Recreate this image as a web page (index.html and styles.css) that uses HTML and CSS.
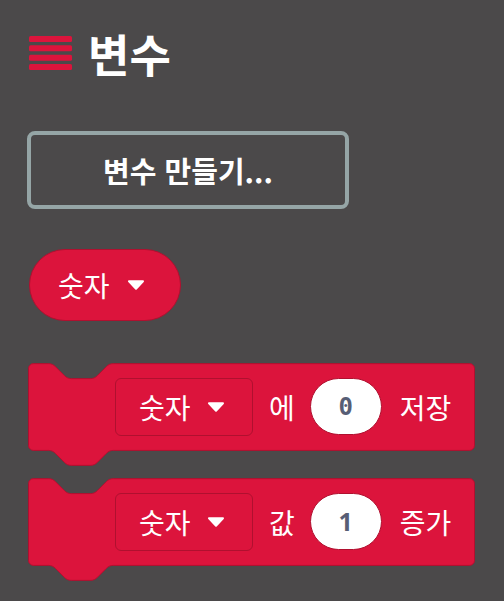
FILE: index.html
```html
<!DOCTYPE html>
<html lang="ko">
<head>
<meta charset="utf-8">
<link rel="stylesheet" href="styles.css">
</head>
<body>
<div class="panel">
  <div class="header">
    <svg class="hamburger" width="43" height="34" viewBox="0 0 43 34">
      <rect x="0" y="0" width="43" height="6" rx="1.5" fill="#dc143c"/>
      <rect x="0" y="9.33" width="43" height="6" rx="1.5" fill="#dc143c"/>
      <rect x="0" y="18.67" width="43" height="6" rx="1.5" fill="#dc143c"/>
      <rect x="0" y="28" width="43" height="6" rx="1.5" fill="#dc143c"/>
    </svg>
    <div class="title">변수</div>
  </div>

  <div class="make-btn">변수 만들기...</div>

  <div class="pill">
    <span class="var-text">숫자</span>
    <svg class="tri" width="18" height="10" viewBox="0 0 18 10"><path d="M2,1.2 L16,1.2 L9,8.8 Z" fill="#fff" stroke="#fff" stroke-width="2" stroke-linejoin="round"/></svg>
  </div>

  <div class="block">
    <svg class="block-shape" width="447" height="103" viewBox="-0.5 -0.5 448 103">
      <path d="M0,5 a5,5 0 0 1 5,-5 H20 c3,0 5,1 7,3 l9,9 c2,2 4,3 7,3 H62 c3,0 5,-1 7,-3 l9,-9 c2,-2 4,-3 7,-3 H442 a5,5 0 0 1 5,5 V82 a5,5 0 0 1 -5,5 H85 c-3,0 -5,1 -7,3 l-9,9 c-2,2 -4,3 -7,3 H43 c-3,0 -5,-1 -7,-3 l-9,-9 c-2,-2 -4,-3 -7,-3 H5 a5,5 0 0 1 -5,-5 Z" fill="#dc143c" stroke="#b0102f" stroke-width="1"/>
    </svg>
    <div class="dd">
      <span class="var-text">숫자</span>
      <svg class="tri" width="18" height="10" viewBox="0 0 18 10"><path d="M2,1.2 L16,1.2 L9,8.8 Z" fill="#fff" stroke="#fff" stroke-width="2" stroke-linejoin="round"/></svg>
    </div>
    <span class="label">에</span>
    <div class="num num-mono">0</div>
    <span class="label">저장</span>
  </div>

  <div class="block block-second">
    <svg class="block-shape" width="447" height="103" viewBox="-0.5 -0.5 448 103">
      <path d="M0,5 a5,5 0 0 1 5,-5 H20 c3,0 5,1 7,3 l9,9 c2,2 4,3 7,3 H62 c3,0 5,-1 7,-3 l9,-9 c2,-2 4,-3 7,-3 H442 a5,5 0 0 1 5,5 V82 a5,5 0 0 1 -5,5 H85 c-3,0 -5,1 -7,3 l-9,9 c-2,2 -4,3 -7,3 H43 c-3,0 -5,-1 -7,-3 l-9,-9 c-2,-2 -4,-3 -7,-3 H5 a5,5 0 0 1 -5,-5 Z" fill="#dc143c" stroke="#b0102f" stroke-width="1"/>
    </svg>
    <div class="dd">
      <span class="var-text">숫자</span>
      <svg class="tri" width="18" height="10" viewBox="0 0 18 10"><path d="M2,1.2 L16,1.2 L9,8.8 Z" fill="#fff" stroke="#fff" stroke-width="2" stroke-linejoin="round"/></svg>
    </div>
    <span class="label">값</span>
    <div class="num num-sans">1</div>
    <span class="label">증가</span>
  </div>
</div>
</body>
</html>
```

FILE: styles.css
```css
html, body {
  margin: 0;
  padding: 0;
}
body {
  background: #4b494a;
  width: 504px;
  height: 601px;
  overflow: hidden;
  font-family: "Noto Sans CJK KR", "Noto Sans", sans-serif;
  color: #fff;
}
.panel {
  display: flex;
  flex-direction: column;
  align-items: flex-start;
  padding-top: 28px;
}
.header {
  display: flex;
  align-items: center;
  height: 50px;
  margin-left: 29px;
  gap: 16px;
}
.hamburger {
  display: block;
}
.title {
  font-size: 45px;
  font-weight: 700;
  line-height: 1;
}
.make-btn {
  margin: 53px 0 0 27px;
  width: 322px;
  height: 78px;
  box-sizing: border-box;
  border: 4px solid #95a5a6;
  border-radius: 8px;
  display: flex;
  align-items: center;
  justify-content: center;
  font-size: 29px;
  font-weight: 700;
  line-height: 1;
}
.pill {
  margin: 40px 0 0 29px;
  width: 152px;
  height: 72px;
  box-sizing: border-box;
  border-radius: 36px;
  background: #dc143c;
  border: 1.5px solid #b0102f;
  display: flex;
  align-items: center;
  padding-left: 28px;
  gap: 17px;
}
.var-text {
  font-size: 28px;
  line-height: 1;
}
.tri {
  display: block;
}
.block {
  position: relative;
  margin: 42px 0 0 28px;
  width: 447px;
  height: 87px;
  box-sizing: border-box;
  padding-left: 87px;
  display: flex;
  align-items: center;
}
.block-second {
  margin-top: 28px;
}
.block-shape {
  position: absolute;
  left: -0.5px;
  top: -0.5px;
  overflow: visible;
}
.dd {
  position: relative;
  width: 138px;
  height: 58px;
  box-sizing: border-box;
  border: 1px solid #b0102f;
  border-radius: 6px;
  display: flex;
  align-items: center;
  padding-left: 23px;
  gap: 16px;
}
.label {
  position: relative;
  font-size: 28px;
  line-height: 1;
  margin-left: 16px;
}
.num {
  position: relative;
  margin-left: 15px;
  margin-right: 2px;
  width: 72px;
  height: 57px;
  box-sizing: border-box;
  border-radius: 28.5px;
  background: #fff;
  border: 1px solid #b0102f;
  color: #575e75;
  display: flex;
  align-items: center;
  justify-content: center;
  line-height: 1;
}
.num-mono {
  font-family: "DejaVu Sans Mono", monospace;
  font-size: 24px;
  font-weight: 700;
}
.num-sans {
  font-family: "Open Sans", "Noto Sans", sans-serif;
  font-size: 25px;
  font-weight: 700;
}
```
